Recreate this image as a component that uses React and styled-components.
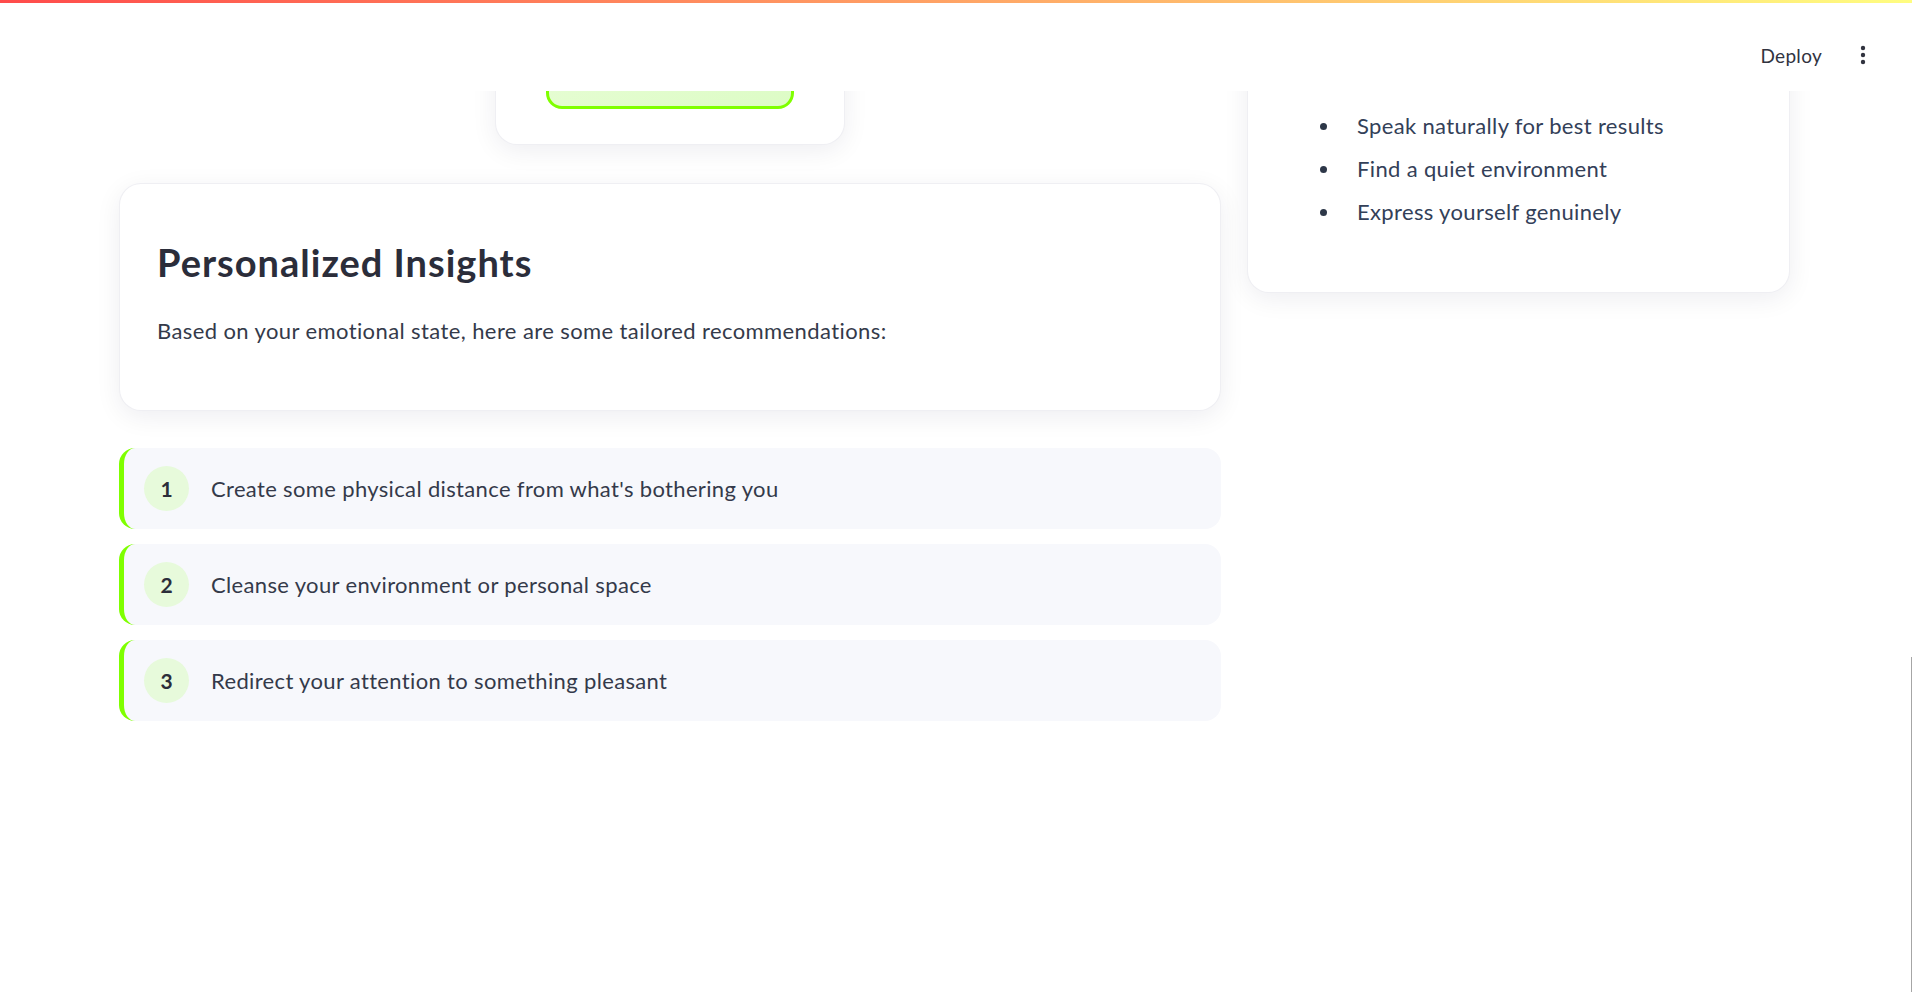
import React from 'react';
import styled, { createGlobalStyle } from 'styled-components';

const GlobalStyle = createGlobalStyle`
  html, body {
    margin: 0;
    padding: 0;
    background: #ffffff;
    font-family: Lato, "Noto Sans", sans-serif;
    color: #31333f;
    overflow: hidden;
  }
  * {
    box-sizing: border-box;
  }
`;

const Header = styled.header`
  position: fixed;
  top: 0;
  left: 0;
  right: 0;
  height: 91px;
  background: #ffffff;
  z-index: 10;
  display: flex;
  justify-content: flex-end;
  align-items: flex-start;
  padding: 35px 37px 0 0;
`;

const Decoration = styled.div`
  position: absolute;
  top: 0;
  left: 0;
  right: 0;
  height: 3px;
  background: linear-gradient(90deg, #ff4b4b, #fffd80);
`;

const Toolbar = styled.div`
  display: flex;
  align-items: center;
  gap: 29px;
  height: 40px;
`;

const DeployButton = styled.button`
  border: none;
  background: transparent;
  padding: 0;
  font-family: inherit;
  font-size: 19px;
  letter-spacing: 0.3px;
  color: #31333f;
  cursor: pointer;
`;

const MenuButton = styled.button`
  width: 24px;
  height: 24px;
  border: none;
  background: transparent;
  padding: 0;
  display: flex;
  align-items: center;
  justify-content: center;
  color: #31333f;
  cursor: pointer;
`;

const ScrollTrack = styled.div`
  position: fixed;
  top: 657px;
  bottom: 0;
  right: 0;
  width: 1px;
  background: #a6a6a6;
`;

const Main = styled.main`
  padding: 20px 122px 0 119px;
  display: grid;
  grid-template-columns: 1102px 543px;
  column-gap: 26px;
  align-items: start;
`;

const Column = styled.div`
  display: flex;
  flex-direction: column;
`;

const Card = styled.section`
  background: #ffffff;
  border: 1px solid rgba(30, 30, 80, 0.07);
  border-radius: 22px;
  box-shadow: 0 6px 26px rgba(20, 20, 60, 0.07);
`;

const RecordCard = styled(Card)`
  align-self: center;
  width: 350px;
  padding: 24px 50px 35px;
`;

const RecordButton = styled.button`
  display: block;
  width: 100%;
  height: 64px;
  border: 3px solid #7fff00;
  border-radius: 16px;
  background: linear-gradient(135deg, #e6fdd3, #ddfcc6);
  cursor: pointer;
`;

const InsightsCard = styled(Card)`
  margin-top: 38px;
  padding: 56px 37px 62px;
`;

const Title = styled.h2`
  margin: 0;
  font-size: 38px;
  line-height: 1.2;
  font-weight: 700;
  color: #2b2d3a;
  letter-spacing: 1px;
`;

const Lead = styled.p`
  margin: 27px 0 0;
  font-size: 22px;
  line-height: 1.6;
  letter-spacing: 0.4px;
  color: #343a4a;
`;

const StepList = styled.ol`
  list-style: none;
  margin: 37px 0 0;
  padding: 0;
  display: flex;
  flex-direction: column;
  gap: 15px;
`;

const Step = styled.li`
  height: 81px;
  display: flex;
  align-items: center;
  gap: 22px;
  padding-left: 20px;
  border-left: 5px solid #7fff00;
  border-radius: 16px;
  background: #f7f8fc;
  font-size: 22px;
  letter-spacing: 0.35px;
  color: #343a4a;
`;

const StepNumber = styled.span`
  flex: none;
  width: 45px;
  height: 45px;
  border-radius: 50%;
  background: #e7fadb;
  display: flex;
  align-items: center;
  justify-content: center;
  font-weight: 700;
  font-size: 21px;
  letter-spacing: 0;
  color: #2b2d3a;
`;

const TipsCard = styled(Card)`
  padding: 89px 40px 64px 72px;
`;

const TipList = styled.ul`
  list-style: none;
  margin: 0;
  padding: 0;
`;

const Tip = styled.li`
  display: flex;
  align-items: center;
  gap: 30px;
  font-size: 22px;
  letter-spacing: 0.35px;
  line-height: 32px;
  color: #334058;
  margin-bottom: 11px;

  &:last-child {
    margin-bottom: 0;
  }

  &::before {
    content: '';
    flex: none;
    width: 7px;
    height: 7px;
    border-radius: 50%;
    background: #2d3748;
  }
`;

const steps = [
  'Create some physical distance from what\'s bothering you',
  'Cleanse your environment or personal space',
  'Redirect your attention to something pleasant',
];

const tips = [
  'Speak naturally for best results',
  'Find a quiet environment',
  'Express yourself genuinely',
];

const DotsIcon = () => (
  <svg width="6" height="20" viewBox="0 0 6 20" fill="currentColor">
    <circle cx="3" cy="3" r="2.2" />
    <circle cx="3" cy="10" r="2.2" />
    <circle cx="3" cy="17" r="2.2" />
  </svg>
);

export default function App() {
  return (
    <>
      <GlobalStyle />
      <Header>
        <Decoration />
        <Toolbar>
          <DeployButton>Deploy</DeployButton>
          <MenuButton aria-label="Main menu">
            <DotsIcon />
          </MenuButton>
        </Toolbar>
      </Header>
      <ScrollTrack />

      <Main>
        <Column>
          <RecordCard>
            <RecordButton aria-label="Record" />
          </RecordCard>

          <InsightsCard>
            <Title>Personalized Insights</Title>
            <Lead>Based on your emotional state, here are some tailored recommendations:</Lead>
          </InsightsCard>

          <StepList>
            {steps.map((text, i) => (
              <Step key={text}>
                <StepNumber>{i + 1}</StepNumber>
                {text}
              </Step>
            ))}
          </StepList>
        </Column>

        <Column>
          <TipsCard>
            <TipList>
              {tips.map((tip) => (
                <Tip key={tip}>{tip}</Tip>
              ))}
            </TipList>
          </TipsCard>
        </Column>
      </Main>
    </>
  );
}
